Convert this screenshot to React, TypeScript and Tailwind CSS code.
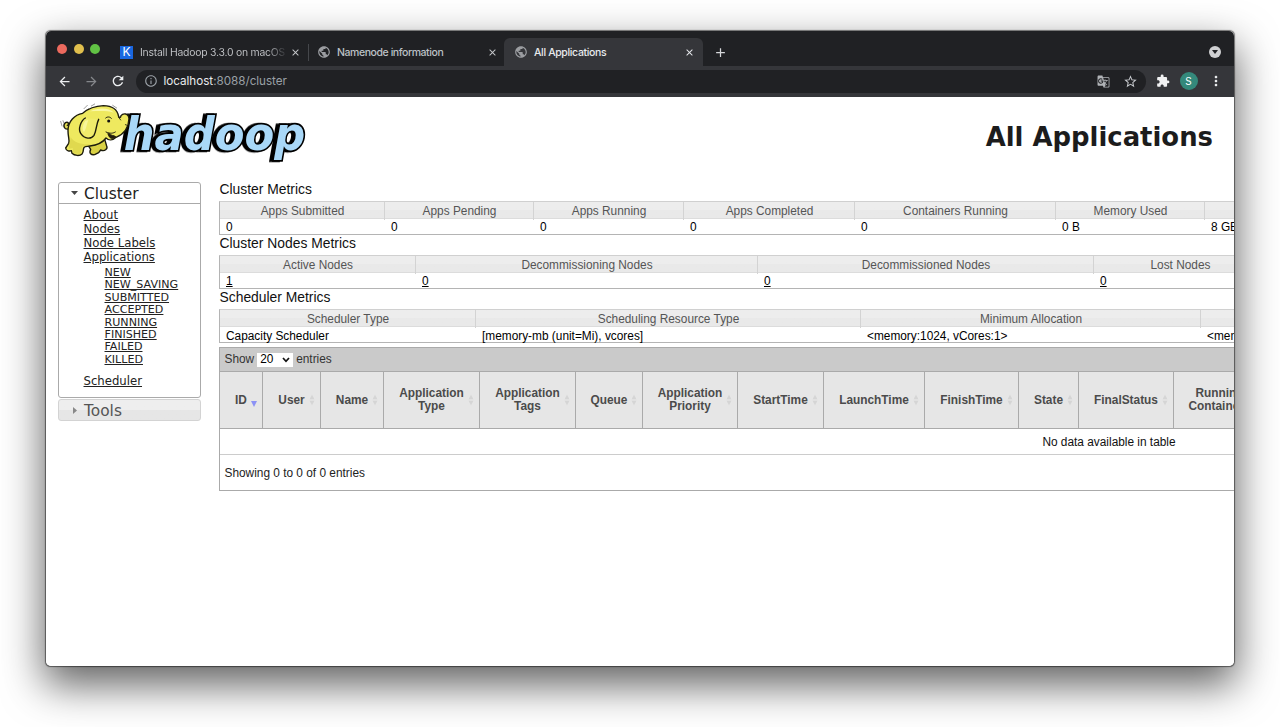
import React from 'react';
import {
  MdAdd,
  MdArrowBack,
  MdArrowForward,
  MdClose,
  MdExtension,
  MdGTranslate,
  MdInfoOutline,
  MdMoreVert,
  MdPublic,
  MdRefresh,
  MdStarBorder,
} from 'react-icons/md';

function HadoopLogo() {
  return (
    <svg width="265" height="72" viewBox="0 0 795 216" className="block overflow-visible">
      <text
        x="221"
        y="157"
        textLength="545"
        lengthAdjust="spacingAndGlyphs"
        fontSize="136"
        fill="#a9d8f8"
        stroke="#000"
        strokeWidth="10"
        paintOrder="stroke"
        className="font-['DejaVu_Sans',sans-serif] font-bold italic [filter:drop-shadow(-9px_1px_0_#000)]"
      >
        hadoop
      </text>
      <path
        d="M36 84 L32 70 M42 76 L39 68 M102 32 L112 22 M108 38 L116 32 M124 24 L134 18 M188 22 L200 30"
        fill="none"
        stroke="#888"
        strokeWidth="2.5"
        strokeLinecap="round"
      />
      <g stroke="#1d1c0c" strokeWidth="4.2" strokeLinejoin="round" strokeLinecap="round">
        <path d="M56 93 C42 96 38 82 46 74 C54 70 60 78 52 82" fill="#e3dc50" />
        <path d="M112 138 L122 154 C116 166 124 172 134 170 L146 164 L152 156 C164 162 174 152 170 144 L164 124 Z" fill="#d9d144" />
        <path
          d="M98 46 C74 50 54 70 54 98 C54 118 60 128 56 136 L47 150 C48 160 60 160 64 158 L66 166 C74 174 90 174 96 168 C104 158 96 148 106 146 L120 144 C136 142 158 134 168 120 C176 128 188 128 198 118 C222 108 236 88 237 62 C236 46 220 44 213 53 C212 60 208 60 206 56 C202 34 186 23 160 23 C132 24 112 34 98 46 Z"
          fill="#eee95f"
        />
        <path d="M106 60 C92 68 84 94 92 106 C104 124 124 124 132 112 C140 98 138 80 146 64" fill="#f0ec6c" />
        <path d="M174 108 C178 124 190 124 197 116 C192 112 184 114 176 106 Z" fill="#241d0c" strokeWidth="3" />
        <path d="M168 102 C180 108 190 106 196 102" fill="none" strokeWidth="3" />
        <path d="M167 60 C172 55 180 56 184 61" fill="none" strokeWidth="3" />
        <path d="M206 58 L212 66 M226 80 L232 82" fill="none" strokeWidth="2.5" />
      </g>
      <path d="M120 40 C144 29 176 28 192 44 C170 37 146 39 120 40 Z" fill="#faf8a6" />
      <path d="M106 68 C97 82 96 94 102 102 C110 90 110 78 115 66 Z" fill="#f8f69a" />
      <path d="M62 118 C72 134 98 142 124 138 L110 144 L96 146 L92 168 L70 166 L68 150 L56 152 Z" fill="#cfc63c" opacity="0.45" />
      <ellipse cx="176" cy="69" rx="4.5" ry="4.5" fill="#111" />
    </svg>
  );
}

function Tab({ title, textClass }: { title: string; textClass: string }) {
  return (
    <>
      <MdPublic className="size-[14px] shrink-0 text-[#9b9da1]" />
      <span className={textClass}>{title}</span>
    </>
  );
}

function BrowserChrome() {
  return (
    <div className="shrink-0 font-['Inter','Roboto',sans-serif]">
      <div className="flex h-[35px] bg-[#202124] pr-[13px]">
        <div className="flex w-[67px] shrink-0 items-center gap-[6.5px] pl-[11px] pt-[1px]">
          <span className="size-[10px] rounded-full bg-[#ec6a5e]" />
          <span className="size-[10px] rounded-full bg-[#e0bf4d]" />
          <span className="size-[10px] rounded-full bg-[#61c244]" />
        </div>
        <div className="flex w-[195px] shrink-0 items-center pl-[7px] pt-[7px]">
          <span className="flex size-[13px] shrink-0 items-center justify-center bg-[#1967e0] text-[12px] leading-none text-white">K</span>
          <span className="ml-[7px] w-[146px] overflow-hidden whitespace-nowrap bg-linear-to-r from-[#c6c8cb] from-87% to-[#3a3b3f] to-99% bg-clip-text pt-px text-[10.4px] leading-[14px] tracking-[-0.22px] text-transparent">
            Install Hadoop 3.3.0 on macOS
          </span>
          <MdClose className="ml-[4px] size-[11px] shrink-0 text-[#c6c8cb]" />
        </div>
        <div className="mt-[13px] h-[17px] w-px shrink-0 bg-[#45474b]" />
        <div className="flex w-[195px] shrink-0 items-center pl-[8px] pt-[7px]">
          <Tab title="Namenode information" textClass="ml-[6px] w-[150px] whitespace-nowrap pt-px text-[10.5px] leading-[14px] tracking-[-0.43px] font-medium text-[#bdc1c6]" />
          <MdClose className="size-[11px] shrink-0 text-[#c6c8cb]" />
        </div>
        <div className="mt-[7px] flex w-[199px] shrink-0 items-center rounded-t-[6px] bg-[#35363a] pl-[10px]">
          <Tab title="All Applications" textClass="ml-[6px] w-[150px] whitespace-nowrap pt-px text-[10.5px] leading-[14px] tracking-[-0.35px] font-medium text-[#e8eaed]" />
          <MdClose className="size-[11px] shrink-0 text-[#e8eaed]" />
        </div>
        <div className="flex grow items-center pl-[10px] pt-[7px]">
          <MdAdd className="size-[15px] text-[#d5d7da]" />
          <span className="ml-auto flex size-[12px] items-center justify-center rounded-full bg-[#cfd0d2]">
            <svg width="6" height="4" viewBox="0 0 6 4">
              <path d="M0 0H6L3 4Z" fill="#202124" />
            </svg>
          </span>
        </div>
      </div>
      <div className="flex h-[31px] items-center bg-[#35363a] pb-px pl-[10.5px] pr-[10.5px]">
        <MdArrowBack className="size-[15px] shrink-0 text-[#eceef0]" />
        <MdArrowForward className="ml-[12px] size-[15px] shrink-0 text-[#85878b]" />
        <MdRefresh className="ml-[11px] size-[16px] shrink-0 text-[#eceef0]" />
        <div className="ml-[10px] flex h-[23px] grow items-center rounded-full bg-[#202124] pl-[8px] pr-[8px]">
          <MdInfoOutline className="size-[14px] text-[#9aa0a6]" />
          <span className="ml-[6px] whitespace-nowrap text-[11.7px] leading-[16px] tracking-[-0.03px] text-[#9aa0a6]">
            <span className="text-[#e8eaed]">localhost</span>:8088/cluster
          </span>
          <MdGTranslate className="ml-auto size-[13px] text-[#b0b3b7]" />
          <MdStarBorder className="ml-[13px] size-[15px] text-[#c6c9cd]" />
        </div>
        <MdExtension className="ml-[10px] size-[14px] shrink-0 text-[#f0f1f2]" />
        <span className="ml-[10px] flex size-[18px] shrink-0 items-center justify-center rounded-full bg-[#34897b] text-[10px] text-white">S</span>
        <MdMoreVert className="ml-[10px] size-[16px] shrink-0 text-[#eceef0]" />
      </div>
    </div>
  );
}

const appStates = ['NEW', 'NEW_SAVING', 'SUBMITTED', 'ACCEPTED', 'RUNNING', 'FINISHED', 'FAILED', 'KILLED'];

function Sidebar() {
  return (
    <nav className="w-[143px] shrink-0 font-['DejaVu_Sans','Verdana',sans-serif] text-[#222]">
      <div className="h-[216px] rounded-[3px] border border-[#aaa]">
        <h3 className="flex h-[21px] items-center border-b border-[#aaa] pl-[12px] text-[15.4px] leading-none">
          <svg width="7" height="4" viewBox="0 0 7 4" className="mr-[6px]">
            <path d="M0 0H7L3.5 4Z" fill="#454545" />
          </svg>
          <span className="pt-[3px]">Cluster</span>
        </h3>
        <ul className="pl-[24.5px] pt-[4px] text-[11.7px] leading-[14px] underline underline-offset-[1px]">
          <li>About</li>
          <li>Nodes</li>
          <li>Node Labels</li>
          <li>Applications</li>
        </ul>
        <ul className="pl-[45.5px] pt-[3px] text-[11.1px] leading-[12.4px] underline underline-offset-[1px]">
          {appStates.map((s) => (
            <li key={s}>{s}</li>
          ))}
        </ul>
        <p className="mt-[8px] pl-[24.5px] text-[11.7px] leading-[14px] underline underline-offset-[1px]">Scheduler</p>
      </div>
      <h3 className="mt-px flex h-[22px] items-center rounded-[3px] border border-[#d3d3d3] bg-linear-to-b from-[#eeeeee] from-50% to-[#e6e6e6] to-50% pl-[14px] text-[15.4px] leading-none text-[#555]">
        <svg width="4" height="7" viewBox="0 0 4 7" className="mr-[7px]">
          <path d="M0 0V7L4 3.5Z" fill="#888" />
        </svg>
        <span className="pt-[3px]">Tools</span>
      </h3>
    </nav>
  );
}

interface MetricsProps {
  title: string;
  headers: string[];
  values: string[];
  columns: string;
  titleClass: string;
  valueClass: string;
}

function Metrics({ title, headers, values, columns, titleClass, valueClass }: MetricsProps) {
  return (
    <section>
      <h4 className={`pl-[0.5px] text-[13.87px] text-[#111] ${titleClass}`}>{title}</h4>
      <div className="w-[1779px] border border-[#b4b4b4] border-t-[#d0d0d0]">
        <div className={`grid h-[17px] border-b border-[#dcdcdc] bg-linear-to-b from-[#ededed] from-50% to-[#e9e9e9] to-50% ${columns}`}>
          {headers.map((h) => (
            <div key={h} className="border-r border-[#d3d3d3] pl-px text-center leading-[18px] text-[#555]">
              {h}
            </div>
          ))}
        </div>
        <div className={`grid ${columns} ${valueClass}`}>
          {values.map((v, i) => (
            <div key={i} className="pl-[6px]">
              {v}
            </div>
          ))}
        </div>
      </div>
    </section>
  );
}

const appColumns: string[][] = [
  ['ID'],
  ['User'],
  ['Name'],
  ['Application', 'Type'],
  ['Application', 'Tags'],
  ['Queue'],
  ['Application', 'Priority'],
  ['StartTime'],
  ['LaunchTime'],
  ['FinishTime'],
  ['State'],
  ['FinalStatus'],
  ['Running', 'Containers'],
];

function SortIcon({ active }: { active: boolean }) {
  return active ? (
    <svg width="6" height="6" viewBox="0 0 6 6" className="mr-[5px] mt-[7px] shrink-0">
      <path d="M0 0H6L3 6Z" fill="#8c92f5" />
    </svg>
  ) : (
    <svg width="6" height="12" viewBox="0 0 6 12" className="mr-[5px] shrink-0">
      <path d="M3 0L6 5.7H0ZM0 6.3H6L3 12Z" fill="#d5d5d5" stroke="#efefef" strokeWidth=".4" />
    </svg>
  );
}

function ApplicationsTable() {
  return (
    <section className="mt-[4px] w-[1780px] border border-[#aaa]">
      <div className="flex h-[23px] items-center bg-[#cacaca] pl-[4.5px] text-[#333]">
        Show
        <span className="ml-[3px] flex h-[14px] w-[36px] items-center bg-white pl-[3px] text-black">
          20
          <svg width="8" height="6" viewBox="0 0 8 6" className="ml-[8.5px]">
            <path d="M1 1L4 4.3L7 1" fill="none" stroke="#111" strokeWidth="1.7" />
          </svg>
        </span>
        <span className="ml-[3px]">entries</span>
      </div>
      <div className="grid h-[58px] grid-cols-[43px_58px_63px_96px_96px_67px_95px_86px_101px_94px_60px_95px_92px] border-y border-[#aaa] bg-[#e6e6e6] font-bold leading-[13px] text-[#4b4b4b]">
        {appColumns.map((lines, i) => (
          <div key={i} className="flex items-center border-r border-[#aaa]">
            <div className="grow pl-[11px] text-center">
              {lines.map((l) => (
                <div key={l}>{l}</div>
              ))}
            </div>
            <SortIcon active={i === 0} />
          </div>
        ))}
      </div>
      <div className="h-[26px] border-b border-[#ccc] text-center leading-[26px] text-[#111]">No data available in table</div>
      <div className="h-[35px] pl-[4.5px] leading-[36px] text-[#222]">Showing 0 to 0 of 0 entries</div>
    </section>
  );
}

export default function App() {
  return (
    <div className="h-[727px] w-[1280px] overflow-hidden bg-white pl-[46px] pt-[31px]">
      <div className="h-[635px] w-[1188px] rounded-[5px] shadow-[0_0_1px_0.5px_rgba(0,0,0,0.5),0_17px_42px_2px_rgba(0,0,0,0.62)]">
        <div className="flex h-full flex-col overflow-hidden rounded-[5px] bg-white">
          <BrowserChrome />
          <header className="flex h-[85px] shrink-0 justify-between pl-[4px] pr-[21px] pt-px">
            <HadoopLogo />
            <h1 className="pt-[22px] font-['DejaVu_Sans','Verdana',sans-serif] text-[25.9px] font-bold leading-[34px] text-[#1c1c1c]">All Applications</h1>
          </header>
          <div className="flex grow gap-[18px] pl-[12px]">
            <Sidebar />
            <main className="min-w-0 grow overflow-hidden font-['Liberation_Sans','Arial',sans-serif] text-[11.87px]">
              <Metrics
                title="Cluster Metrics"
                titleClass="h-[19px] leading-[15px]"
                headers={['Apps Submitted', 'Apps Pending', 'Apps Running', 'Apps Completed', 'Containers Running', 'Memory Used', 'Memory Total']}
                values={['0', '0', '0', '0', '0', '0 B', '8 GB']}
                columns="grid-cols-[165px_149px_150px_171px_201px_149px_200px]"
                valueClass="h-[15px] leading-[16px]"
              />
              <Metrics
                title="Cluster Nodes Metrics"
                titleClass="h-[20px] leading-[16px]"
                headers={['Active Nodes', 'Decommissioning Nodes', 'Decommissioned Nodes', 'Lost Nodes']}
                values={['1', '0', '0', '0']}
                columns="grid-cols-[196px_342px_336px_173px]"
                valueClass="h-[15px] leading-[17px] underline underline-offset-[1px]"
              />
              <Metrics
                title="Scheduler Metrics"
                titleClass="h-[20px] leading-[16px]"
                headers={['Scheduler Type', 'Scheduling Resource Type', 'Minimum Allocation', 'Maximum Allocation']}
                values={['Capacity Scheduler', '[memory-mb (unit=Mi), vcores]', '<memory:1024, vCores:1>', '<memory:8192, vCores:4>']}
                columns="grid-cols-[256px_385px_340px_340px]"
                valueClass="h-[15px] leading-[18px]"
              />
              <ApplicationsTable />
            </main>
          </div>
        </div>
      </div>
    </div>
  );
}
